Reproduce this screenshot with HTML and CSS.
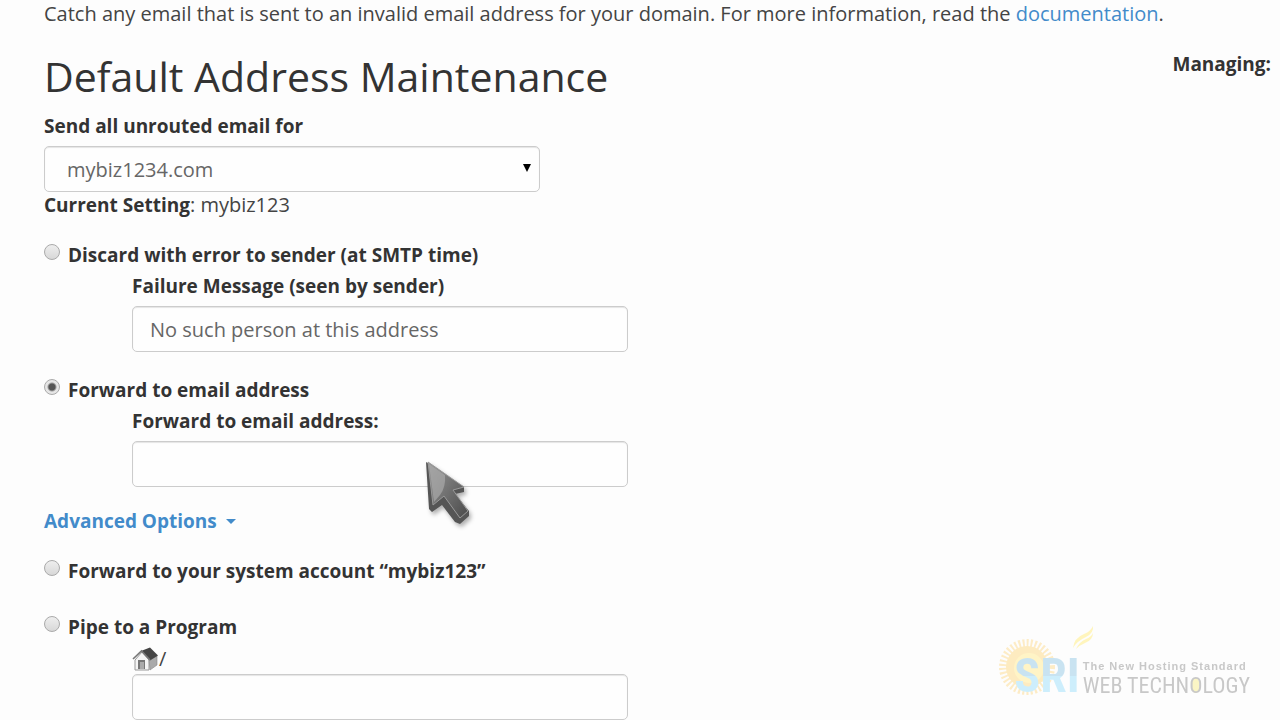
FILE: index.html
```html
<!DOCTYPE html>
<html lang="en">
<head>
  <meta charset="UTF-8" />
  <meta name="viewport" content="width=device-width, initial-scale=1" />
  <title>Default Address Maintenance</title>
  <link rel="stylesheet" href="styles.css">
</head>
<body>

  <div class="page">
    <p class="intro">Catch any email that is sent to an invalid email address for your domain. For more information, read the <a href="#">documentation</a>.</p>

    <div class="title-row">
      <h1>Default Address Maintenance</h1>
      <strong class="managing">Managing:</strong>
    </div>

    <form>
      <label class="field-label" for="domain">Send all unrouted email for</label>
      <div class="select-box">
        <select id="domain" class="control">
          <option>mybiz1234.com</option>
        </select>
      </div>
      <p class="current"><strong>Current Setting</strong>: mybiz123</p>

      <div class="option">
        <div class="option-head">
          <input type="radio" name="action" id="discard" />
          <label for="discard">Discard with error to sender (at SMTP time)</label>
        </div>
        <div class="option-body">
          <label class="field-label" for="failmsg">Failure Message (seen by sender)</label>
          <input type="text" class="control" id="failmsg" value="No such person at this address" />
        </div>
      </div>

      <div class="option">
        <div class="option-head">
          <input type="radio" name="action" id="forward" checked />
          <label for="forward">Forward to email address</label>
        </div>
        <div class="option-body">
          <label class="field-label" for="fwdemail">Forward to email address:</label>
          <input type="text" class="control" id="fwdemail" />
        </div>
      </div>

      <a href="#" class="advanced">Advanced Options <span class="caret"></span></a>

      <div class="option option-short">
        <div class="option-head">
          <input type="radio" name="action" id="system" />
          <label for="system">Forward to your system account “mybiz123”</label>
        </div>
      </div>

      <div class="option">
        <div class="option-head">
          <input type="radio" name="action" id="pipe" />
          <label for="pipe">Pipe to a Program</label>
        </div>
        <div class="option-body">
          <label class="home-label" for="program">
            <svg width="27" height="24" viewBox="0 0 27 24" role="img" aria-label="Home">
              <path d="M3 13 L10 5 L17 13 V23 H3z" fill="#f4f4f4" stroke="#999" />
              <path d="M17 12 L25 9 V18 L18 23z" fill="#aaa" stroke="#888" stroke-width=".6" />
              <path d="M9 4 L18 .5 L26 8.500 L18 13.500z" fill="#444" />
              <path d="M1 12 L9.500 4 L18 13" fill="none" stroke="#777" stroke-width="1.600" />
              <path d="M6 13h7v9H6z" fill="#777" />
              <path d="M8 15h4v7H8z" fill="#aaa" />
            </svg>
            <span>/</span>
          </label>
          <input type="text" class="control" id="program" />
        </div>
      </div>
    </form>
  </div>

  <svg class="cursor" width="54" height="72" viewBox="0 0 54 72" aria-hidden="true">
    <defs>
      <linearGradient id="steel" x1="0" y1="0" x2="1" y2="1">
        <stop offset="0" stop-color="#999" />
        <stop offset="1" stop-color="#4a4a4a" />
      </linearGradient>
    </defs>
    <path d="M4 4 L42 29 V34 L33 36 L47 53 V58 L38 66 L33 64 L20 47 L10 54 L7 51z" fill="#555" />
    <path d="M6 4 L42 29 L31 32 L46 53 L38 60 L22 38 L11 47z" fill="url(#steel)" stroke="#999" />
    <path d="M7 6 L23 17 Q24 29 18 37 L12 44z" fill="#aaa" opacity=".7" />
  </svg>

  <div class="logo">
    <svg width="110" height="90" viewBox="0 0 110 90" aria-hidden="true">
      <circle cx="37" cy="55" r="24" fill="none" stroke="#fdecc6" stroke-width="8" stroke-dasharray="2 2" />
      <circle cx="37" cy="55" r="21" fill="#fdebc0" />
      <circle cx="39" cy="56" r="15" fill="#fff4c6" />
      <path d="M83 36 Q84 26 94 22 Q101 19 103 14 Q104 21 96 25 Q87 29 83 36z" fill="#fff5bd" />
      <path d="M86 37 Q89 30 96 27 Q101 25 103 21 Q103 28 95 31 Q90 33 86 37z" fill="#fff5bd" />
    </svg>
    <span class="logo-sri">SRI</span>
    <div class="logo-text">
      <span class="logo-tag">The New Hosting Standard</span>
      <span class="logo-name">WEB TECHN<span class="logo-o">O</span>LOGY</span>
    </div>
  </div>

</body>
</html>
```
FILE: styles.css
```css
body {
  margin: 0;
  background-color: #fdfdfd;
  color: #444;
  font-family: "Open Sans", sans-serif;
  font-size: 20px;
  line-height: 28px;
}

a {
  color: #428bca;
  text-decoration: none;
}

strong {
  color: #333;
  font-size: 19px;
}

.page {
  padding: 0 9px 0 44px;
}

.intro {
  margin: 0 0 26px;
}

.title-row {
  display: flex;
  justify-content: space-between;
  align-items: flex-start;
  margin-bottom: 14px;
}

h1 {
  margin: 0;
  color: #333;
  font-size: 41px;
  font-weight: 400;
  line-height: 44px;
}

.managing {
  line-height: 20px;
}

.field-label {
  display: block;
  margin-bottom: 6px;
  color: #333;
  font-size: 19px;
  font-weight: 700;
}

.control {
  display: block;
  box-sizing: border-box;
  width: 100%;
  height: 46px;
  padding: 0 17px;
  border: 1px solid #ccc;
  border-radius: 5px;
  box-shadow: inset 0 1px 1px rgba(0,0,0,0.1);
  background-color: #fefefe;
  color: #666;
  font-family: inherit;
  font-size: 20px;
}

.select-box {
  position: relative;
  max-width: 496px;
}

.select-box select {
  appearance: none;
  padding-left: 22px;
}

.select-box::after {
  content: "";
  position: absolute;
  right: 9px;
  top: 18px;
  border-left: 4px solid transparent;
  border-right: 4px solid transparent;
  border-top: 8px solid #000;
  pointer-events: none;
}

.current {
  margin: 0 0 23px;
  line-height: 26px;
}

.option {
  margin-bottom: 24px;
}

.option-short {
  margin-bottom: 28px;
}

.option-head {
  display: flex;
  align-items: flex-start;
  gap: 8px;
  color: #333;
  font-size: 19px;
  font-weight: 700;
}

.option-head input {
  appearance: none;
  flex: none;
  width: 16px;
  height: 16px;
  margin: 3px 0 0;
  border: 1px solid #aaa;
  border-radius: 50%;
  background: linear-gradient(#eee, #d8d8d8);
}

.option-head input:checked {
  background: radial-gradient(circle, #555 0 3px, #e6e6e6 5px);
}

.option-body {
  max-width: 496px;
  margin: 3px 0 0 88px;
}

.advanced {
  display: flex;
  align-items: center;
  gap: 9px;
  margin: -4px 0 22px;
  font-size: 19px;
  font-weight: 700;
}

.caret {
  border-left: 5px solid transparent;
  border-right: 5px solid transparent;
  border-top: 5px solid #428bca;
}

.home-label {
  display: flex;
  align-items: center;
  height: 30px;
}

.cursor {
  position: absolute;
  left: 422px;
  top: 458px;
  filter: drop-shadow(2px 3px 2px rgba(0,0,0,0.3));
  pointer-events: none;
}

.logo {
  position: fixed;
  right: 30px;
  bottom: 20px;
  display: flex;
  align-items: flex-end;
  gap: 3px;
  font-family: "Roboto Condensed", Roboto, sans-serif;
  color: #c8c8c8;
}

.logo svg {
  position: absolute;
  left: -24px;
  bottom: -2px;
}

.logo-sri {
  position: relative;
  font-size: 48px;
  font-weight: 700;
  line-height: 48px;
  color: transparent;
  background: linear-gradient(#c9e3f1 50%, #cdeefc 50%);
  background-clip: text;
}

.logo-text {
  position: relative;
  display: flex;
  flex-direction: column;
}

.logo-tag {
  font-family: "Liberation Sans", sans-serif;
  font-size: 11px;
  font-weight: 700;
  line-height: 12px;
  letter-spacing: 1px;
}

.logo-name {
  font-size: 22px;
  line-height: 28px;
}

.logo-o {
  border-radius: 50%;
  background: radial-gradient(closest-side, #fbf5c5 60%, transparent 62%);
}
```
